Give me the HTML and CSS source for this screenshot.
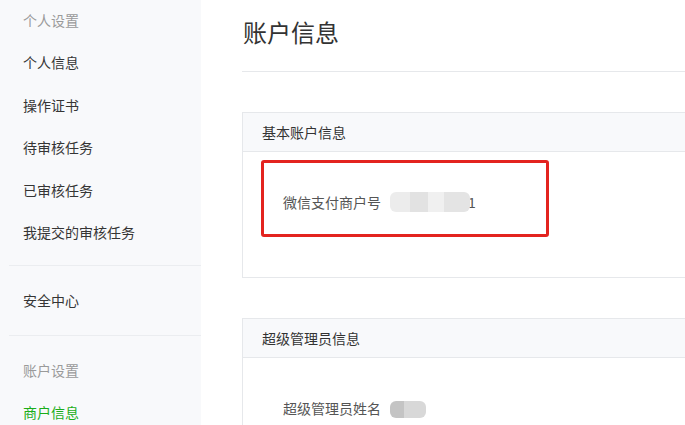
FILE: index.html
```html
<!DOCTYPE html>
<html>
<head>
  <title>账户信息</title>
  <link rel="stylesheet" href="styles.css">
</head>
<body>
  <div class="page">
    <div class="sidebar">
      <div class="menu-group first">
        <div class="menu-title">个人设置</div>
        <div class="menu-item">个人信息</div>
        <div class="menu-item">操作证书</div>
        <div class="menu-item">待审核任务</div>
        <div class="menu-item">已审核任务</div>
        <div class="menu-item">我提交的审核任务</div>
      </div>
      <div class="menu-group">
        <div class="menu-item">安全中心</div>
      </div>
      <div class="menu-group">
        <div class="menu-title">账户设置</div>
        <div class="menu-item active">商户信息</div>
      </div>
    </div>

    <div class="main">
      <h1 class="page-title">账户信息</h1>

      <div class="card">
        <div class="card-header">基本账户信息</div>
        <div class="card-body">
          <div class="field highlight">
            <span class="field-label">微信支付商户号</span>
            <span class="masked wide"><i></i><i></i><i></i><i></i></span>
            <span class="field-value">1</span>
          </div>
        </div>
      </div>

      <div class="card">
        <div class="card-header">超级管理员信息</div>
        <div class="card-body">
          <div class="field">
            <span class="field-label">超级管理员姓名</span>
            <span class="masked narrow"><i></i><i></i></span>
          </div>
        </div>
      </div>
    </div>
  </div>
</body>
</html>
```

FILE: styles.css
```css
html, body {
  margin: 0;
  overflow: hidden;
}

body {
  font-family: "Noto Sans CJK SC", "Liberation Sans", sans-serif;
  font-size: 14px;
  color: #333;
  background-color: #fff;
}

.page {
  display: flex;
  width: 760px;
  min-height: 425px;
}

/* left menu */
.sidebar {
  width: 201px;
  flex-shrink: 0;
  background-color: #f8f9fb;
  padding-left: 9px;
  box-sizing: border-box;
}

.menu-group {
  padding: 14px 0 12px;
  border-top: 1px solid #ebedf0;
}

.menu-group.first {
  padding-top: 0;
  padding-bottom: 11px;
  border-top: none;
}

.menu-title,
.menu-item {
  height: 42.4px;
  line-height: 40px;
  padding-left: 14px;
}

.menu-title {
  color: #9a9a9a;
}

.menu-item {
  color: #353535;
  cursor: pointer;
}

.menu-item.active {
  color: #1aad19;
}

/* content */
.main {
  flex: 1;
  padding-left: 41px;
}

.page-title {
  margin: 0;
  padding: 15px 0 22px 1px;
  font-size: 24px;
  font-weight: normal;
  line-height: 34px;
  color: #333;
  border-bottom: 1px solid #e6e8eb;
}

.card {
  margin-top: 40px;
  border: 1px solid #e6e8eb;
  border-right: none;
}

.card-header {
  height: 38px;
  line-height: 38px;
  padding-left: 19px;
  background-color: #f8f9fb;
  border-bottom: 1px solid #e6e8eb;
}

.card-body {
  padding: 8px 0 40px 18px;
}

.field {
  display: flex;
  align-items: center;
  width: 288px;
  height: 77px;
  box-sizing: border-box;
  padding: 7px 0 0 19px;
  border: 3px solid transparent;
  border-radius: 3px;
}

.field.highlight {
  border-color: #e3231f;
}

.field-label {
  color: #555;
  line-height: 20px;
  margin-right: 9px;
}

.field-value {
  color: #555;
  margin-left: -2px;
}

/* blurred values */
.masked {
  display: inline-flex;
  height: 20px;
  border-radius: 6px;
  overflow: hidden;
  filter: blur(0.6px);
}

.masked i {
  display: block;
  height: 100%;
}

.masked.wide {
  width: 80px;
}

.masked.wide i:nth-child(1) { width: 20px; background: #ececec; }
.masked.wide i:nth-child(2) { width: 18px; background: #e2e2e2; }
.masked.wide i:nth-child(3) { width: 16px; background: #f0f0f0; }
.masked.wide i:nth-child(4) { width: 26px; background: #e4e4e4; }

.masked.narrow {
  width: 36px;
  height: 17px;
  margin-top: 3px;
}

.masked.narrow i:nth-child(1) { width: 14px; background: #c4c4c4; }
.masked.narrow i:nth-child(2) { width: 22px; background: #d8d8d8; }
```
